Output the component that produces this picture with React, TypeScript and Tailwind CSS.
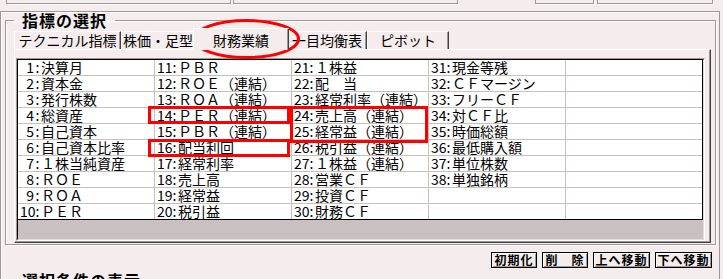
// App.tsx
const COLUMNS: string[][] = [
  ["1:決算月", "2:資本金", "3:発行株数", "4:総資産", "5:自己資本", "6:自己資本比率", "7:１株当純資産", "8:ＲＯＥ", "9:ＲＯＡ", "10:ＰＥＲ"],
  ["11:ＰＢＲ", "12:ＲＯＥ（連結）", "13:ＲＯＡ（連結）", "14:ＰＥＲ（連結）", "15:ＰＢＲ（連結）", "16:配当利回", "17:経常利率", "18:売上高", "19:経常益", "20:税引益"],
  ["21:１株益", "22:配　当", "23:経常利率（連結）", "24:売上高（連結）", "25:経常益（連結）", "26:税引益（連結）", "27:１株益（連結）", "28:営業ＣＦ", "29:投資ＣＦ", "30:財務ＣＦ"],
  ["31:現金等残", "32:ＣＦマージン", "33:フリーＣＦ", "34:対ＣＦ比", "35:時価総額", "36:最低購入額", "37:単位株数", "38:単独銘柄", "", ""],
  ["", "", "", "", "", "", "", "", "", ""],
]

const TABS = [
  { label: "テクニカル指標", w: "w-[107px]" },
  { label: "株価・足型", w: "w-[74px]" },
  { label: "財務業績", w: "w-[96px]", active: true },
  { label: "一目均衡表", w: "w-[80px]" },
  { label: "ピボット", w: "w-[82px]" },
]

const BUTTONS = [
  { label: "初期化", w: "w-[46px]" },
  { label: "削　除", w: "w-[46px]" },
  { label: "上へ移動", w: "w-[57px]" },
  { label: "下へ移動", w: "w-[57px]" },
]

function Cell({ text, col, row }: { text: string; col: number; row: number }) {
  const m = text.match(/^(\d+):(.*)$/)
  return (
    <div
      className={
        "pl-[2px] text-[14px] leading-[15px] whitespace-nowrap border-[#c8c0c0] " +
        (col < 4 ? "border-r " : "") +
        (row < 9 ? "h-[16px] border-b" : "h-[15px]")
      }
    >
      {m && (
        <>
          <span className="inline-block w-[14px] text-right">{m[1]}</span>
          <span className="inline-block w-[7px] text-center">:</span>
          {m[2]}
        </>
      )}
    </div>
  )
}

export default function App() {
  return (
    <div className="relative w-[723px] h-[279px] overflow-hidden bg-[#f5eded] text-black font-['Noto_Sans_CJK_JP',sans-serif]">
      {/* bottom edges of the panel above */}
      <div className="h-[11px] flex items-start">
        <div className="ml-[6px] w-[225px] h-[4px] border-x border-b border-[#a09898] shadow-[1px_1px_0_#fff]" />
        <div className="ml-[2px] w-[225px] h-[4px] border-x border-b border-[#a09898] shadow-[1px_1px_0_#fff]" />
        <div className="ml-[77px] w-[59px] h-[4px] border-x border-b border-[#a09898] shadow-[1px_1px_0_#fff]" />
        <div className="ml-[3px] w-[116px] h-[4px] border-x border-b border-[#a09898] shadow-[1px_1px_0_#fff]" />
      </div>

      {/* outer panel */}
      <div className="w-[720px] h-[268px] border-t border-x border-[#a09898] shadow-[inset_1px_1px_0_#fff]">
        {/* 指標の選択 */}
        <fieldset className="ml-[4px] w-[711px] border border-[#a09898] shadow-[inset_1px_1px_0_#fff,1px_1px_0_#fff] pl-[8px] pr-[4px] pb-[1px]">
          <legend className="px-[8px] text-[16px] leading-[16px] font-bold tracking-[1px]">指標の選択</legend>

          {/* tabs */}
          <div className="flex items-end h-[21px]">
            {TABS.map((t) =>
              t.active ? (
                <div
                  key={t.label}
                  className={`${t.w} relative z-10 -mx-[2px] -mb-[1px] h-[22px] pt-[2px] flex justify-center bg-[#f5eded] border-t border-l border-white border-r border-r-[#404040] shadow-[inset_-1px_0_0_#a09898] text-[14px] leading-[18px]`}
                >
                  {t.label}
                </div>
              ) : (
                <div
                  key={t.label}
                  className={`${t.w} h-[18px] flex justify-center border-t border-l border-white border-r border-r-[#404040] shadow-[inset_-1px_0_0_#a09898] text-[14px] leading-[17px]`}
                >
                  {t.label}
                </div>
              )
            )}
          </div>

          {/* tab panel */}
          <div className="h-[194px] border border-white border-r-[#404040] border-b-[#404040] shadow-[inset_-1px_-1px_0_#a09898] pl-[1px] pr-[5px] pt-[8px]">
            <div className="w-[689px] border border-[#a09898] border-b-white border-r-white">
              <div className="border border-black border-b-[#e4dcdc] border-r-[#e4dcdc] bg-[#c9c1c1]">
                <div className="bg-white border-r border-b border-black grid grid-cols-[137px_137px_137px_137px_136px]">
                  {Array.from({ length: 10 }).map((_, r) =>
                    COLUMNS.map((col, c) => <Cell key={`${r}-${c}`} text={col[r]} col={c} row={r} />)
                  )}
                </div>
                <div className="h-[19px]" />
              </div>
            </div>
          </div>
        </fieldset>

        {/* buttons */}
        <div className="mt-[7px] pr-[7px] flex justify-end gap-[5px]">
          {BUTTONS.map((b) => (
            <button
              key={b.label}
              className={`${b.w} h-[16px] border border-black shadow-[inset_1px_1px_0_#fff,inset_-1px_-1px_0_#a09898] text-[12px] leading-[12px] font-bold tracking-[1px] flex items-center justify-center`}
            >
              {b.label}
            </button>
          ))}
        </div>

        {/* 選択条件の表示 */}
        <div className="mt-[4px] pl-[21px] text-[16px] leading-[16px] font-bold tracking-[1px]">選択条件の表示</div>
      </div>

      {/* red annotation marks */}
      <svg className="absolute left-[190px] top-[17px]" width="115" height="45" viewBox="0 0 115 45">
        <ellipse cx="56.5" cy="22" rx="52" ry="18.5" fill="none" stroke="#ff0000" strokeWidth="3" />
      </svg>
      <div className="absolute left-[148px] top-[106px] w-[142px] h-[18px] border-[3px] border-[#ff0000]" />
      <div className="absolute left-[148px] top-[139px] w-[142px] h-[18px] border-[3px] border-[#ff0000]" />
      <div className="absolute left-[290px] top-[106px] w-[138px] h-[37px] border-[3px] border-[#ff0000]" />
    </div>
  )
}
